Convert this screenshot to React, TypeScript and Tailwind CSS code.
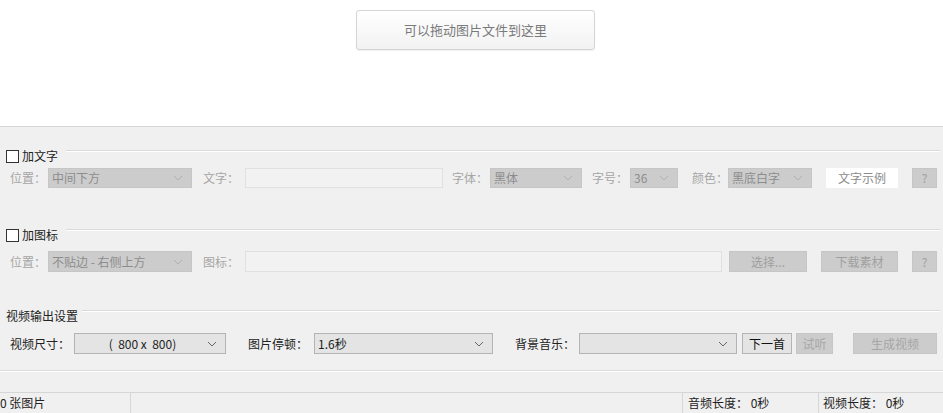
import React from "react";

const font = { fontFamily: '"Noto Sans CJK SC", "Microsoft YaHei", sans-serif' };

function Chevron({ color = "#9a9a9a" }: { color?: string }) {
  return (
    <svg width="10" height="6" viewBox="0 0 10 6" className="shrink-0">
      <path d="M1 1 L5 5 L9 1" fill="none" stroke={color} strokeWidth="1" />
    </svg>
  );
}

function DisSelect({ w, text }: { w: string; text: string }) {
  return (
    <div className={`${w} h-full bg-[#cccccc] border border-[#c6c6c6] flex items-center pl-[3px] pr-[8px] justify-between`}>
      <span className="text-[12px] text-[#8c8c8c] leading-none whitespace-pre">{text}</span>
      <Chevron color="#b0b0b0" />
    </div>
  );
}

function EnSelect({ w, text, center }: { w: string; text: string; center?: boolean }) {
  return (
    <div className={`${w} h-full bg-[#e4e4e4] border border-[#b4b4b4] flex items-center pl-[3px] pr-[8px] justify-between`}>
      <span className={`text-[12px] text-[#222] leading-none whitespace-pre ${center ? "flex-1 text-center" : ""}`}>{text}</span>
      <Chevron color="#666" />
    </div>
  );
}

function GroupHeader({ label, checkbox, lineStart }: { label: string; checkbox?: boolean; lineStart: string }) {
  return (
    <div className="h-[16px] flex items-center relative">
      {checkbox ? (
        <div className="ml-[6px] w-[13px] h-[13px] border-[1.5px] border-[#333] bg-white mt-[2px]" />
      ) : null}
      <span className={`${checkbox ? "ml-[3px]" : "ml-[6px]"} text-[12px] text-[#222] leading-none mt-[2px]`}>{label}</span>
      <div className={`absolute ${lineStart} right-[3px] top-[3px] h-[2px] border-t border-[#dadada] border-b border-b-white`} />
    </div>
  );
}

export default function App() {
  return (
    <div className="w-[943px] h-[413px] overflow-hidden flex flex-col bg-white" style={font}>
      <div className="h-[126px] flex justify-center shrink-0">
        <div className="mt-[10px] ml-[8px] w-[239px] h-[40px] rounded-[3px] border border-[#d4d4d4] bg-gradient-to-b from-white to-[#f2f2f2] shadow-[0_1px_1px_rgba(0,0,0,0.06)] flex items-center justify-center">
          <span className="text-[13px] text-[#7a7a7a]">可以拖动图片文件到这里</span>
        </div>
      </div>
      <div className="flex-1 bg-[#f0f0f0] border-t border-[#d6d6d6] flex flex-col">
        <div className="mt-[20px]">
          <GroupHeader label="加文字" checkbox lineStart="left-[66px]" />
        </div>
        <div className="mt-[5px] h-[20px] flex items-stretch pl-[10px] text-[12px]">
          <span className="w-[38px] flex items-center text-[#a6a6a6]">位置：</span>
          <DisSelect w="w-[144px]" text="中间下方" />
          <span className="ml-[11px] w-[42px] flex items-center text-[#a6a6a6]">文字：</span>
          <div className="w-[198px] bg-[#f2f2f2] border border-[#e0e0e0]" />
          <span className="ml-[9px] w-[38px] flex items-center text-[#a6a6a6]">字体：</span>
          <DisSelect w="w-[92px]" text="黑体" />
          <span className="ml-[10px] w-[38px] flex items-center text-[#a6a6a6]">字号：</span>
          <DisSelect w="w-[48px]" text="36" />
          <span className="ml-[14px] w-[36px] flex items-center text-[#a6a6a6]">颜色：</span>
          <DisSelect w="w-[84px]" text="黑底白字" />
          <div className="ml-[14px] w-[72px] bg-white flex items-center justify-center text-[#8c8c8c]">文字示例</div>
          <div className="ml-[14px] w-[25px] bg-[#cccccc] border border-[#c6c6c6] flex items-center justify-center text-[#a0a0a0]">?</div>
        </div>

        <div className="mt-[38px]">
          <GroupHeader label="加图标" checkbox lineStart="left-[66px]" />
        </div>
        <div className="mt-[9px] h-[21px] flex items-stretch pl-[10px] text-[12px]">
          <span className="w-[38px] flex items-center text-[#a6a6a6]">位置：</span>
          <DisSelect w="w-[144px]" text="不贴边 - 右侧上方" />
          <span className="ml-[11px] w-[42px] flex items-center text-[#a6a6a6]">图标：</span>
          <div className="w-[477px] bg-[#f2f2f2] border border-[#e0e0e0]" />
          <div className="ml-[7px] w-[78px] bg-[#cccccc] border border-[#c6c6c6] flex items-center justify-center text-[#a0a0a0]">选择...</div>
          <div className="ml-[14px] w-[77px] bg-[#cccccc] border border-[#c6c6c6] flex items-center justify-center text-[#a0a0a0]">下载素材</div>
          <div className="ml-[14px] w-[25px] bg-[#cccccc] border border-[#c6c6c6] flex items-center justify-center text-[#a0a0a0]">?</div>
        </div>

        <div className="mt-[35px]">
          <GroupHeader label="视频输出设置" lineStart="left-[82px]" />
        </div>
        <div className="mt-[10px] h-[21px] flex items-stretch pl-[10px] text-[12px]">
          <span className="w-[64px] flex items-center text-[#222]">视频尺寸：</span>
          <EnSelect w="w-[152px]" text="(  800 x  800)" center />
          <span className="ml-[22px] w-[66px] flex items-center text-[#222]">图片停顿：</span>
          <EnSelect w="w-[179px]" text="1.6秒" />
          <span className="ml-[22px] w-[64px] flex items-center text-[#222]">背景音乐：</span>
          <EnSelect w="w-[158px]" text="" />
          <div className="ml-[5px] w-[50px] bg-[#e4e4e4] border border-[#b4b4b4] flex items-center justify-center text-[#111]">下一首</div>
          <div className="ml-[4px] w-[37px] bg-[#cccccc] border border-[#c6c6c6] flex items-center justify-center text-[#a6a6a6]">试听</div>
          <div className="ml-[20px] w-[84px] bg-[#cccccc] border border-[#c6c6c6] flex items-center justify-center text-[#a6a6a6]">生成视频</div>
        </div>

        <div className="mt-[16px] h-[2px] border-t border-[#dcdcdc] border-b border-b-white" />
        <div className="flex-1" />
        <div className="h-[21px] border-t border-[#d6d6d6] flex items-stretch text-[12px] text-[#222]">
          <div className="w-[130px] flex items-center">0 张图片</div>
          <div className="w-[1px] bg-[#d6d6d6]" />
          <div className="flex-1" />
          <div className="w-[1px] bg-[#d6d6d6]" />
          <div className="w-[135px] flex items-center pl-[5px] whitespace-pre">音频长度： 0秒</div>
          <div className="w-[1px] bg-[#d6d6d6]" />
          <div className="w-[124px] flex items-center pl-[4px] whitespace-pre">视频长度： 0秒</div>
        </div>
      </div>
    </div>
  );
}
